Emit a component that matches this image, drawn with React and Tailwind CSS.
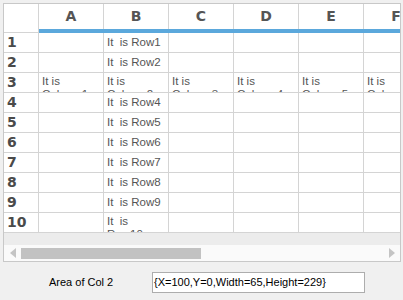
const cols = ["A", "B", "C", "D", "E", "F"];
const rows = [1, 2, 3, 4, 5, 6, 7, 8, 9, 10];

const cellText = (r, c) => {
  if (r === 3) return `It is Column${c + 1}`;
  if (r === 10 && c === 1) return "It  is Row10";
  if (c === 1) return `It  is Row${r}`;
  return "";
};

const Cell = ({ text, wrap }) => (
  <div className="w-[65px] shrink-0 h-[20px] border-r border-b border-[#d4d4d4] bg-white overflow-hidden">
    {text && (
      <div
        className={
          wrap
            ? "pl-[3px] pt-[2px] text-[11.5px] leading-[13px] text-[#555] whitespace-pre-wrap w-[40px]"
            : "pl-[3px] h-[19px] flex items-center text-[11.5px] text-[#555] whitespace-pre"
        }
      >
        {text}
      </div>
    )}
  </div>
);

export default function App() {
  return (
    <div className="w-[403px] h-[300px] bg-[#f0f0f0] pt-[3px] pl-[3px]" style={{ fontFamily: "'Liberation Sans', Arial, sans-serif" }}>
      <div className="w-[398px] h-[259px] border border-[#c8c8c8] flex flex-col bg-white">
        <div className="flex-1 overflow-hidden bg-[#ececec]">
          <div className="flex w-max">
            <div className="w-[35px] h-[29px] border-r border-b border-[#d4d4d4] bg-white" />
            {cols.map((c) => (
              <div key={c} className="w-[65px] h-[29px] shrink-0 flex flex-col bg-white">
                <div className="flex-1 border-r border-[#d4d4d4] flex items-center justify-center text-[14px] font-bold text-[#555]" style={{ fontFamily: "'DejaVu Sans', sans-serif" }}>
                  {c}
                </div>
                <div className="h-[4px] bg-[#5ba8dc]" />
              </div>
            ))}
          </div>
          {rows.map((r) => (
            <div key={r} className="flex w-max">
              <div className="w-[35px] h-[20px] border-r border-b border-[#d4d4d4] bg-white flex items-center pl-[3px] text-[14px] font-bold text-[#4a4a4a]" style={{ fontFamily: "'DejaVu Sans', sans-serif" }}>
                {r}
              </div>
              {cols.map((c, i) => (
                <Cell key={c} text={cellText(r, i)} wrap={r === 3 || r === 10} />
              ))}
            </div>
          ))}
        </div>
        <div className="h-[16px] flex items-center bg-[#fafafa]">
          <svg width="6" height="10" viewBox="0 0 6 10" className="ml-[6px]">
            <polygon points="6,0 6,10 0,5" fill="#c4c4c4" />
          </svg>
          <div className="ml-[5px] w-[180px] h-[11px] bg-[#c2c2c2]" />
          <div className="flex-1" />
          <svg width="6" height="10" viewBox="0 0 6 10" className="mr-[5px]">
            <polygon points="0,0 0,10 6,5" fill="#c4c4c4" />
          </svg>
        </div>
      </div>
      <div className="flex items-center mt-[10px]">
        <div className="ml-[46px] w-[103px] text-[11px] text-black">Area of Col 2</div>
        <div className="w-[213px] h-[21px] border border-[#adadad] bg-white flex items-center pl-[1px] text-[11px] text-black">
          {"{X=100,Y=0,Width=65,Height=229}"}
        </div>
      </div>
    </div>
  );
}
